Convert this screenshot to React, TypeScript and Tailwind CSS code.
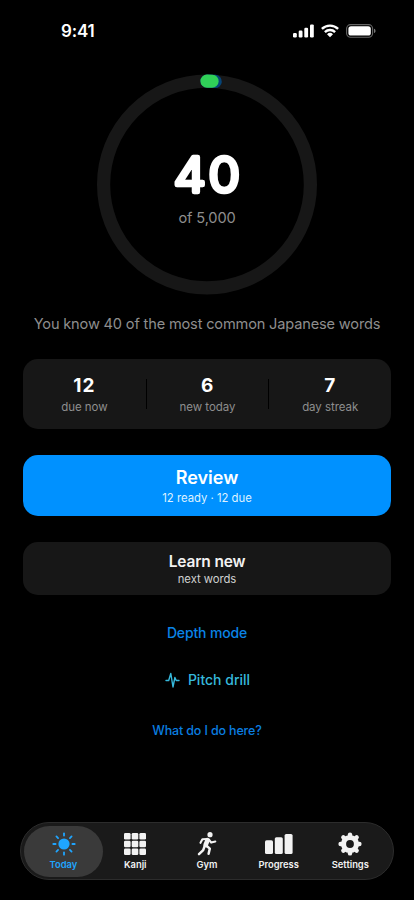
import type { ReactNode } from "react";

const KNOWN = 40;
const TOTAL = 5000;

const R = 103.4;
const CIRC = 2 * Math.PI * R;

const STATS = [
  { value: "12", label: "due now" },
  { value: "6", label: "new today" },
  { value: "7", label: "day streak" },
];

function StatusBar() {
  return (
    <div className="flex h-[62px] items-center justify-between pl-[61px] pr-[38px]">
      <span className="pt-[2px] text-[17px] font-semibold tracking-[-0.2px]">9:41</span>
      <div className="flex items-center gap-[7px]">
        <svg width="21" height="14" viewBox="0 0 21 14" fill="#fff">
          <rect x="0" y="9" width="3.8" height="4.4" rx="1.2" />
          <rect x="5.7" y="6.6" width="3.8" height="6.8" rx="1.2" />
          <rect x="11.3" y="3.8" width="3.8" height="9.6" rx="1.2" />
          <rect x="17" y="0.4" width="3.8" height="13" rx="1.2" />
        </svg>
        <svg width="18" height="14" viewBox="0 0 18 14" fill="none" stroke="#fff" strokeWidth="2.4">
          <path d="M0.9 4.9a11.6 11.6 0 0 1 16.2 0" />
          <path d="M3.9 8.1a7.3 7.3 0 0 1 10.2 0" />
          <path d="M9 13.3L6 10.3a4.3 4.3 0 0 1 6 0z" fill="#fff" stroke="none" />
        </svg>
        <svg width="30" height="14" viewBox="0 0 30 14">
          <rect x="0.6" y="0.6" width="26" height="12.6" rx="4" fill="none" stroke="#666" strokeWidth="1.1" />
          <rect x="2.4" y="2.3" width="22.4" height="9.2" rx="2.6" fill="#fff" />
          <path d="M28 4.8v4.2c1-.4 1.5-1.1 1.5-2.1s-.5-1.7-1.5-2.1z" fill="#777" />
        </svg>
      </div>
    </div>
  );
}

function ProgressRing() {
  const known = (KNOWN / TOTAL) * CIRC;
  return (
    <svg width="220" height="221" viewBox="0 0 220 221" className="block">
      <g fill="none" strokeWidth="13.2" strokeLinecap="round" transform="rotate(-90 110 110.5)">
        <circle cx="110" cy="110.5" r={R} stroke="#171717" />
        <circle cx="110" cy="110.5" r={R} stroke="#064477" strokeDasharray={`8.4 ${CIRC}`} />
        <circle cx="110" cy="110.5" r={R} stroke="#30d158" strokeDasharray={`${known} ${CIRC}`} />
      </g>
      {/* thin digits with a round-joined outline give the rounded look */}
      <text
        x="1.2"
        y="0"
        transform="translate(110 118) scale(1.06 1)"
        textAnchor="middle"
        fill="#fff"
        stroke="#fff"
        strokeWidth="4.6"
        strokeLinejoin="round"
        className="text-[48px] font-light tracking-[2.6px]"
      >
        {KNOWN}
      </text>
      <text x="110" y="148.5" textAnchor="middle" fill="#8e8e8e" className="text-[14.6px] tracking-[-0.15px]">
        of 5,000
      </text>
    </svg>
  );
}

function Tab({ label, active, children }: { label: string; active?: boolean; children: ReactNode }) {
  return (
    <div
      className={
        active
          ? "-mr-[3.6px] flex h-[51px] w-[79px] flex-col items-center rounded-full bg-[#3a3a3a] pt-[5px] text-[#1fa5ff]"
          : "flex h-[51px] w-[71.7px] flex-col items-center pt-[5px] text-[#f2f2f2]"
      }
    >
      <div className="mb-px flex h-[26px] items-center justify-center">{children}</div>
      <span className="text-[9.4px] leading-[14px] font-semibold">{label}</span>
    </div>
  );
}

function SunIcon() {
  return (
    <svg width="24" height="24" viewBox="0 0 24 24">
      <circle cx="12" cy="12" r="5.6" fill="currentColor" />
      <g stroke="currentColor" strokeWidth="1.8" strokeLinecap="round">
        {[0, 45, 90, 135, 180, 225, 270, 315].map((a) => (
          <path key={a} d="M12 1.3v2.3" transform={`rotate(${a} 12 12)`} />
        ))}
      </g>
    </svg>
  );
}

function GridIcon() {
  return (
    <svg width="22" height="22" viewBox="0 0 22 22" fill="currentColor">
      {[0, 7.7, 15.4].map((y) =>
        [0, 7.7, 15.4].map((x) => <rect key={`${x}-${y}`} x={x} y={y} width="6.6" height="6.6" rx="1.3" />),
      )}
    </svg>
  );
}

function RunIcon() {
  return (
    <svg width="20" height="24" viewBox="0 0 20 24" fill="none" stroke="currentColor" strokeLinecap="round" strokeLinejoin="round">
      <circle cx="13" cy="2.7" r="2.6" fill="currentColor" stroke="none" />
      <path d="M10.6 8.2L8.6 13" strokeWidth="4.6" />
      <path d="M10 7L5.4 7.3L3.5 10.8" strokeWidth="2.1" />
      <path d="M12 7.6L14.2 10.6L18.3 9.6" strokeWidth="2.1" />
      <path d="M9.2 13.5L12.8 16.6L11.6 21.8" strokeWidth="2.5" />
      <path d="M7.6 14.2L6.2 18.2L2 22.2" strokeWidth="2.5" />
    </svg>
  );
}

function BarsIcon() {
  return (
    <svg width="28" height="22" viewBox="0 0 28 22" fill="currentColor">
      <rect x="0" y="7.2" width="8" height="13.8" rx="1.6" />
      <rect x="9.8" y="4.2" width="8" height="16.8" rx="1.6" />
      <rect x="19.6" y="1" width="8" height="20" rx="1.6" />
    </svg>
  );
}

function GearIcon() {
  return (
    <svg width="24" height="24" viewBox="0 0 24 24">
      <g stroke="currentColor" strokeWidth="4.4" strokeLinecap="round">
        {[0, 45, 90, 135, 180, 225, 270, 315].map((a) => (
          <path key={a} d="M12 2.6V4.6" transform={`rotate(${a} 12 12)`} />
        ))}
      </g>
      <circle cx="12" cy="12" r="6.5" fill="none" stroke="currentColor" strokeWidth="5.2" />
    </svg>
  );
}

export default function App() {
  return (
    <div className="flex h-[900px] w-[414px] flex-col bg-black font-[Inter,sans-serif] text-white">
      <StatusBar />

      <main className="flex flex-1 flex-col items-center px-[23px] pt-[12px]">
        <ProgressRing />
        <p className="mt-[18px] text-[14.6px] leading-[22px] tracking-[-0.17px] whitespace-nowrap text-[#8e8e8e]">
          You know {KNOWN} of the most common Japanese words
        </p>

        {/* Stats */}
        <div className="mt-[24px] flex h-[70px] w-full items-center rounded-[15px] bg-[#171717]">
          {STATS.map((s, i) => (
            <div key={s.label} className="flex flex-1 items-center">
              {i > 0 && <div className="h-[30px] w-px bg-black" />}
              <div className="flex flex-1 flex-col items-center pt-[2px]">
                <span className="text-[19px] leading-[24px] font-bold tracking-[0.9px]">{s.value}</span>
                <span className="text-[11.5px] leading-[18px] tracking-[-0.05px] text-[#8e8e8e]">{s.label}</span>
              </div>
            </div>
          ))}
        </div>

        {/* Actions */}
        <button className="mt-[26px] flex h-[61px] w-full flex-col items-center rounded-[15px] bg-[#0091ff] pt-[11px]">
          <span className="text-[18px] leading-[23px] font-semibold">Review</span>
          <span className="text-[11.3px] leading-[18px] text-[#dff1ff]">12 ready · 12 due</span>
        </button>
        <button className="mt-[26px] flex h-[53px] w-full flex-col items-center rounded-[15px] bg-[#171717] pt-[10px]">
          <span className="text-[15.5px] leading-[20px] font-semibold tracking-[-0.15px] text-[#f2f2f2]">Learn new</span>
          <span className="text-[11.3px] leading-[15px] tracking-[-0.05px] text-[#d0d0d0]">next words</span>
        </button>

        <button className="mt-[28px] text-[14px] leading-[20px] font-medium tracking-[-0.15px] text-[#0a84e6]">
          Depth mode
        </button>
        <button className="mt-[27px] flex items-center gap-[8px] pl-px text-[14px] leading-[20px] font-medium text-[#36b9dc]">
          <svg
            width="15"
            height="16"
            viewBox="0 0 15 16"
            fill="none"
            stroke="currentColor"
            strokeWidth="1.4"
            strokeLinecap="round"
            strokeLinejoin="round"
          >
            <path d="M1 8.5h2.7L5.8 1.5L8 15L9.9 5.5L11.2 8.5H14" />
          </svg>
          Pitch drill
        </button>
        <button className="mt-[32px] text-[12.5px] leading-[18px] font-medium tracking-[-0.15px] text-[#0a7ee0]">
          What do I do here?
        </button>
      </main>

      <nav className="mx-auto mb-[20px] flex h-[58px] w-[374px] items-center rounded-full border border-[#2c2c2c] bg-[#1a1a1a] pl-[3px]">
        <Tab label="Today" active>
          <SunIcon />
        </Tab>
        <Tab label="Kanji">
          <GridIcon />
        </Tab>
        <Tab label="Gym">
          <RunIcon />
        </Tab>
        <Tab label="Progress">
          <BarsIcon />
        </Tab>
        <Tab label="Settings">
          <GearIcon />
        </Tab>
      </nav>
    </div>
  );
}
